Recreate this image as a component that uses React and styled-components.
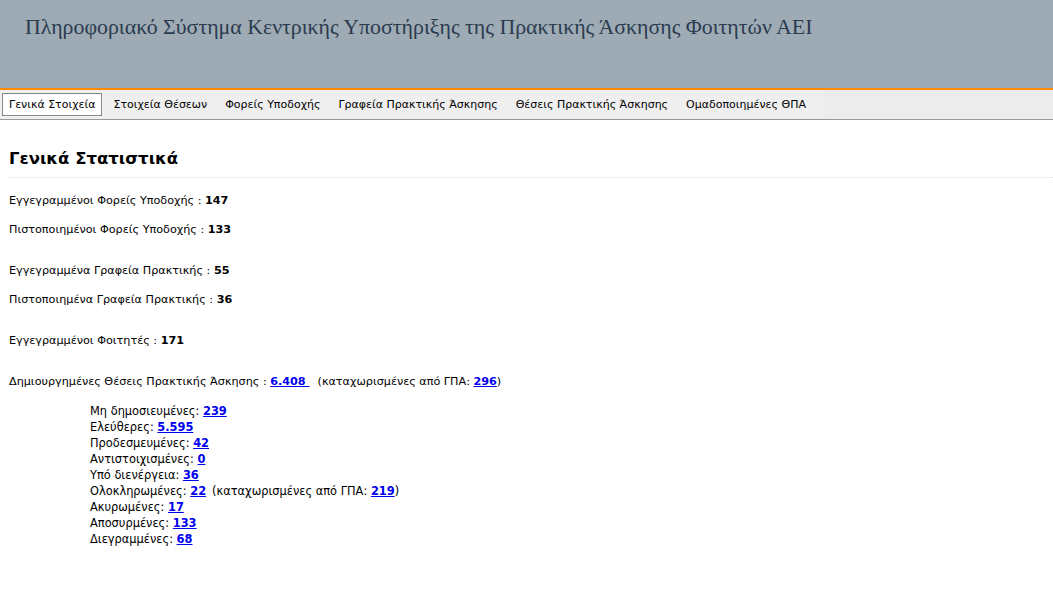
import React from 'react';
import styled, { createGlobalStyle } from 'styled-components';

const GlobalStyle = createGlobalStyle`
  html, body {
    margin: 0;
    padding: 0;
    background: #ffffff;
  }
  body {
    font-family: "DejaVu Sans", Tahoma, sans-serif;
    font-size: 11.2px;
    color: #000;
  }
`;

const Header = styled.header`
  background-color: #9eabb4;
  border-bottom: 2px solid #ff8c00;
  padding: 15px 0 0 25px;
  box-sizing: border-box;
  height: 90px;
`;

const Title = styled.h1`
  margin: 0;
  font-family: "Liberation Serif", "Times New Roman", serif;
  font-weight: normal;
  font-size: 21.85px;
  line-height: 24px;
  color: #2b3b50;
`;

const MenuBar = styled.nav`
  background-color: #ececec;
  border-bottom: 1px solid #999;
  height: 30px;
  box-sizing: border-box;
`;

const MenuList = styled.ul`
  list-style: none;
  margin: 0;
  padding: 0 10px 0 2px;
  display: inline-flex;
  align-items: center;
  height: 100%;
  background-color: #efefef;
`;

const MenuItem = styled.li`
  font-size: 11px;
  line-height: 21px;
  padding: 0 ${p => (p.$active ? '6px' : '8px')};
  margin-right: ${p => (p.$active ? '2px' : '0')};
  border: 1px solid ${p => (p.$active ? '#888' : 'transparent')};
  background: ${p => (p.$active ? '#fff' : 'transparent')};
  color: #000;
  white-space: nowrap;
`;

const Content = styled.main`
  padding: 0 0 0 9px;
`;

const Heading = styled.h2`
  margin: 29px 0 0;
  padding-bottom: 9px;
  font-size: 16.5px;
  font-weight: bold;
  border-bottom: 1px dotted #e0e0e0;
`;

const Stats = styled.div`
  padding-top: 16px;
`;

const StatLine = styled.p`
  margin: 0;
  height: ${p => p.$h || 29}px;
  line-height: 14px;
  white-space: nowrap;
`;

const Num = styled.b``;

const NumLink = styled.a`
  color: #0000ee;
  font-weight: bold;
  text-decoration: underline;
  white-space: pre;
`;

const SubList = styled.div`
  padding-left: 81px;
  padding-top: 12px;
  font-size: 11.4px;
`;

const SubLine = styled.div`
  line-height: 16px;
  white-space: nowrap;
`;

const Note = styled.span`
  margin-left: ${p => p.$gap || 8}px;
`;

const tabs = [
  'Γενικά Στοιχεία',
  'Στοιχεία Θέσεων',
  'Φορείς Υποδοχής',
  'Γραφεία Πρακτικής Άσκησης',
  'Θέσεις Πρακτικής Άσκησης',
  'Ομαδοποιημένες ΘΠΑ',
];

const subs = [
  ['Μη δημοσιευμένες', '239'],
  ['Ελεύθερες', '5.595'],
  ['Προδεσμευμένες', '42'],
  ['Αντιστοιχισμένες', '0'],
  ['Υπό διενέργεια', '36'],
  ['Ολοκληρωμένες', '22', '219'],
  ['Ακυρωμένες', '17'],
  ['Αποσυρμένες', '133'],
  ['Διεγραμμένες', '68'],
];

export default function App() {
  return (
    <>
      <GlobalStyle />
      <Header>
        <Title>Πληροφοριακό Σύστημα Κεντρικής Υποστήριξης της Πρακτικής Άσκησης Φοιτητών ΑΕΙ</Title>
      </Header>
      <MenuBar>
        <MenuList>
          {tabs.map((t, i) => (
            <MenuItem key={t} $active={i === 0}>{t}</MenuItem>
          ))}
        </MenuList>
      </MenuBar>
      <Content>
        <Heading>Γενικά Στατιστικά</Heading>
        <Stats>
          <StatLine>Εγγεγραμμένοι Φορείς Υποδοχής : <Num>147</Num></StatLine>
          <StatLine $h={41}>Πιστοποιημένοι Φορείς Υποδοχής : <Num>133</Num></StatLine>
          <StatLine>Εγγεγραμμένα Γραφεία Πρακτικής : <Num>55</Num></StatLine>
          <StatLine $h={41}>Πιστοποιημένα Γραφεία Πρακτικής : <Num>36</Num></StatLine>
          <StatLine $h={41}>Εγγεγραμμένοι Φοιτητές : <Num>171</Num></StatLine>
          <StatLine $h={16}>
            Δημιουργημένες Θέσεις Πρακτικής Άσκησης : <NumLink href="#">6.408 </NumLink>
            <Note>(καταχωρισμένες από ΓΠΑ: <NumLink href="#">296</NumLink>)</Note>
          </StatLine>
        </Stats>
        <SubList>
          {subs.map(([label, n, gpa]) => (
            <SubLine key={label}>
              {label}: <NumLink href="#">{n}</NumLink>
              {gpa && (
                <Note $gap={6}>(καταχωρισμένες από ΓΠΑ: <NumLink href="#">{gpa}</NumLink>)</Note>
              )}
            </SubLine>
          ))}
        </SubList>
      </Content>
    </>
  );
}
